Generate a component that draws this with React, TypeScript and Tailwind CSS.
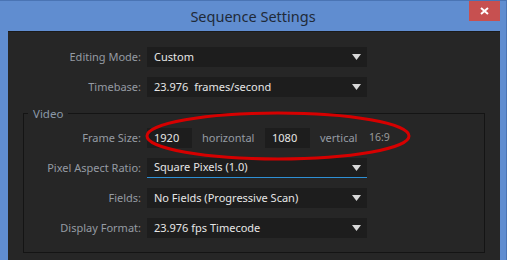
import React from 'react';

const font = { fontFamily: '"Noto Sans", "Open Sans", sans-serif' };

const Arrow: React.FC = () => (
    <svg width="9" height="6" viewBox="0 0 9 6" className="shrink-0">
        <path d="M0 0 H9 L4.5 6 Z" fill="#d8d8d8" />
    </svg>
);

const Select: React.FC<{ value: string; focused?: boolean }> = ({ value, focused }) => (
    <div className={`w-[220px] h-[20px] bg-[#1d1d1d] flex items-center justify-between pl-[7px] pr-[6px] text-[#e6e6e6] ${focused ? 'border-b border-[#2e8fd4]' : ''}`}>
        <span className="whitespace-pre">{value}</span>
        <Arrow />
    </div>
);

const Row: React.FC<{ label: string; labelW: string; children: React.ReactNode }> = ({ label, labelW, children }) => (
    <div className="flex items-center h-[20px]">
        <div className={`${labelW} text-right pr-[6px] text-[#959ba3]`}>{label}</div>
        {children}
    </div>
);

export default function App() {
    return (
        <div className="w-[507px] h-[260px] bg-[#608dd0] border-t border-[#4a74b4] border-r border-r-[#4a74b4] flex flex-col overflow-hidden text-[11px]" style={font}>
            <div className="relative h-[30px] flex items-center justify-center">
                <span className="text-[14.5px] text-[#1f2a38] mt-[2px]">Sequence Settings</span>
                <div className="absolute right-[6px] top-0 w-[31px] h-[20px] bg-[#c75050] flex items-center justify-center">
                    <svg width="9" height="8" viewBox="0 0 9 8">
                        <path d="M1 1 L8 7 M8 1 L1 7" stroke="#fff" strokeWidth="2" />
                    </svg>
                </div>
            </div>
            <div className="ml-[8px] mr-[6px] flex-1 bg-[#262626] border-t border-[#1a1a1a] pt-[15px] flex flex-col gap-[10px]">
                <Row label="Editing Mode:" labelW="w-[139px]"><Select value="Custom" /></Row>
                <Row label="Timebase:" labelW="w-[139px]"><Select value="23.976  frames/second" /></Row>

                <div className="relative ml-[15px] mr-[15px] mt-[6px] h-[140px] border border-[#141414] flex flex-col gap-[10px] pt-[14px]">
                    <span className="absolute -top-[9px] left-[4px] px-[5px] bg-[#262626] text-[#8a98a8] text-[11.5px]">Video</span>
                    <Row label="Frame Size:" labelW="w-[123px]">
                        <div className="w-[45px] h-[20px] bg-[#1d1d1d] pl-[7px] text-[#e6e6e6] flex items-center">1920</div>
                        <span className="ml-[10px] w-[63px] text-[#959ba3]">horizontal</span>
                        <div className="w-[45px] h-[20px] bg-[#1d1d1d] pl-[7px] text-[#e6e6e6] flex items-center">1080</div>
                        <span className="ml-[10px] w-[49px] text-[#959ba3]">vertical</span>
                        <span className="text-[#9a9a9a] text-[10.5px]">16:9</span>
                    </Row>
                    <Row label="Pixel Aspect Ratio:" labelW="w-[123px]"><Select value="Square Pixels (1.0)" focused /></Row>
                    <Row label="Fields:" labelW="w-[123px]"><Select value="No Fields (Progressive Scan)" /></Row>
                    <Row label="Display Format:" labelW="w-[123px]"><Select value="23.976 fps Timecode" /></Row>

                    <svg className="absolute left-[121px] -top-[3px] pointer-events-none" width="266" height="52" viewBox="0 0 266 52">
                        <ellipse cx="133" cy="25" rx="131" ry="23" fill="none" stroke="#d60000" strokeWidth="3" />
                    </svg>
                </div>
            </div>
        </div>
    );
}
